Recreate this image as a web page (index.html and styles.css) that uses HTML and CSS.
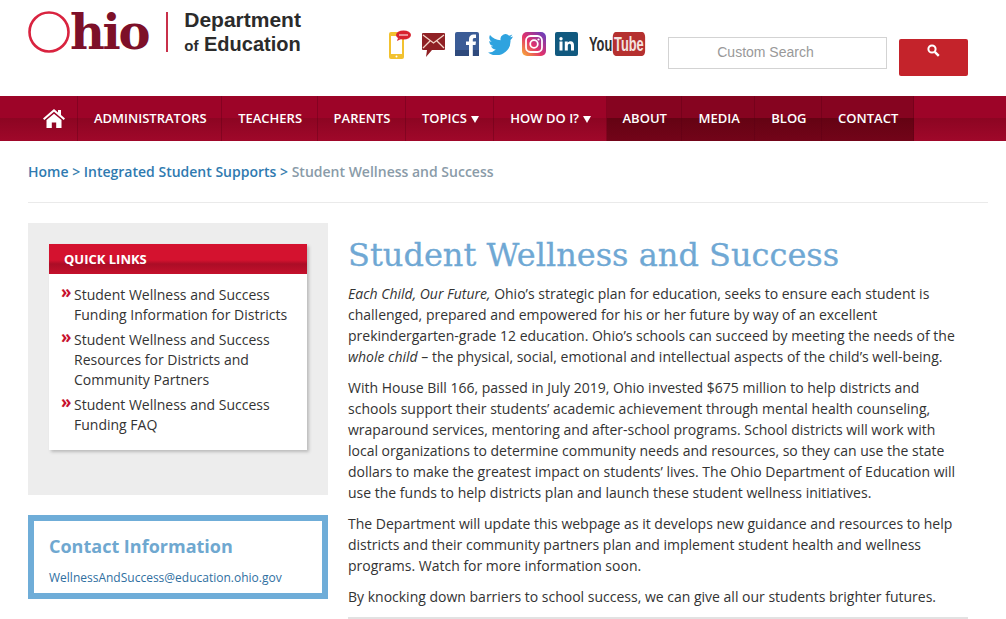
FILE: index.html
```html
<!DOCTYPE html>
<html lang="en">
<head>
  <meta charset="UTF-8" />
  <title>Student Wellness and Success</title>
  <link rel="stylesheet" href="styles.css">
</head>
<body>
  <header class="site-header">
    <a class="logo" href="#">
      <svg class="logo-o" width="43" height="42" viewBox="0 0 43 42"><circle cx="21" cy="21" r="19.5" fill="none" stroke="#d9233f" stroke-width="2.6"/></svg>
      <span class="logo-hio">hio</span>
      <span class="logo-rule"></span>
      <span class="logo-dept"><span class="dept-top">Department</span><br><small>of</small> Education</span>
    </a>
    <div class="social">
      <svg width="24" height="30" viewBox="0 0 24 30"><rect x="1" y="3" width="15" height="27" rx="2" fill="#f2c230"/><rect x="3" y="7" width="11" height="18" fill="#fff"/><circle cx="8.500" cy="27.500" r="1" fill="#fff"/><ellipse cx="15.500" cy="6" rx="7.500" ry="4.500" fill="#d8232f"/><path d="M10 9l-1 3 4-2z" fill="#d8232f"/><path d="M11 6h9" stroke="#fff" stroke-width="1"/></svg>
      <svg width="25" height="25" viewBox="0 0 25 25"><path d="M2 1h21a1 1 0 0 1 1 1v15a1 1 0 0 1-1 1H11l-6 7 1-7H2a1 1 0 0 1-1-1V2a1 1 0 0 1 1-1z" fill="#8f2024"/><path d="M2 3l10.500 8L23 3M2 16l7-7M23 16l-7-7" fill="none" stroke="#f3d5c8" stroke-width="1.300"/></svg>
      <svg width="24" height="24" viewBox="0 0 24 24"><rect width="24" height="24" rx="2" fill="#3b5c96"/><rect y="18" width="24" height="6" fill="#2f4a7c"/><path d="M14 24V13h-3V9.500h3V7c0-3 2-4.500 4.500-4.500H21V6h-1.500C18 6 17.800 6.700 17.800 8v1.500H21l-.5 3.500h-2.700v11z" fill="#fff"/></svg>
      <svg width="25" height="21" viewBox="0 0 25 21"><path d="M25 2.500a10 10 0 0 1-3 .8A5 5 0 0 0 24.300.5a10 10 0 0 1-3.200 1.200A5 5 0 0 0 12.600 6.300 14.400 14.400 0 0 1 2 1a5 5 0 0 0 1.600 6.700A5 5 0 0 1 1.300 7a5 5 0 0 0 4 5 5 5 0 0 1-2.200.1 5 5 0 0 0 4.700 3.500A10 10 0 0 1 0 18.600 14.300 14.300 0 0 0 22.500 6c1-.8 1.900-2 2.500-3.500z" fill="#2fa3df"/></svg>
      <svg width="24" height="24" viewBox="0 0 24 24"><defs><linearGradient id="ig" x1="0" y1="1" x2="1" y2="0"><stop offset="0" stop-color="#f9b233"/><stop offset=".45" stop-color="#e1306c"/><stop offset="1" stop-color="#5b3fc4"/></linearGradient></defs><rect width="24" height="24" rx="5" fill="url(#ig)"/><rect x="4" y="4" width="16" height="16" rx="4.500" fill="none" stroke="#fff" stroke-width="1.800"/><circle cx="12" cy="12" r="3.800" fill="none" stroke="#fff" stroke-width="1.800"/><circle cx="16.500" cy="7.500" r="1.100" fill="#fff"/></svg>
      <svg width="23" height="24" viewBox="0 0 23 24"><rect width="23" height="24" rx="2" fill="#11597f"/><rect x="4.500" y="9.500" width="3" height="9" fill="#fff"/><circle cx="6" cy="6.800" r="1.700" fill="#fff"/><path d="M9.800 9.500h2.900v1.300c.6-1 1.700-1.500 2.900-1.500 2.500 0 3.400 1.600 3.400 4.200v5h-3v-4.500c0-1.200-.3-2.200-1.500-2.200s-1.700 1-1.700 2.200v4.500h-3z" fill="#fff"/></svg>
      <span class="youtube"><span class="yt-you">You</span><span class="yt-tube">Tube</span></span>
    </div>
    <form class="search">
      <input class="search-input" type="text" placeholder="Custom Search">
      <button class="search-btn" type="button" aria-label="Search">
        <svg width="13" height="13" viewBox="0 0 13 13"><circle cx="5" cy="5" r="3.600" fill="none" stroke="#fff" stroke-width="2"/><path d="M7.800 7.800l4 4" stroke="#fff" stroke-width="2.400"/></svg>
      </button>
    </form>
  </header>

  <nav class="main-nav">
    <a class="nav-home" href="#" aria-label="Home">
      <svg width="22" height="19" viewBox="0 0 22 19"><path d="M11 0L0 9.500l1.300 1.500L11 2.800 20.700 11 22 9.500 18 6V1h-3v2.500z" fill="#fff"/><path d="M11 4.800L3.500 11v8h5.300v-5.500h4.400V19h5.300v-8z" fill="#fff"/></svg>
    </a>
    <a href="#">ADMINISTRATORS</a>
    <a href="#">TEACHERS</a>
    <a href="#">PARENTS</a>
    <a href="#">TOPICS <i class="caret"></i></a>
    <a href="#">HOW DO I? <i class="caret"></i></a>
    <a class="dark" href="#">ABOUT</a>
    <a class="dark" href="#">MEDIA</a>
    <a class="dark" href="#">BLOG</a>
    <a class="dark" href="#">CONTACT</a>
  </nav>

  <div class="breadcrumb">
    <a href="#">Home</a> &gt; <a href="#">Integrated Student Supports</a> &gt; <span>Student Wellness and Success</span>
  </div>

  <div class="page">
    <aside class="sidebar">
      <div class="quick-wrap">
        <div class="quick-box">
          <h3>QUICK LINKS</h3>
          <ul>
            <li>Student Wellness and Success Funding Information for Districts</li>
            <li>Student Wellness and Success Resources for Districts and Community Partners</li>
            <li>Student Wellness and Success Funding FAQ</li>
          </ul>
        </div>
      </div>
      <div class="contact">
        <h3>Contact Information</h3>
        <a href="#">WellnessAndSuccess@education.ohio.gov</a>
      </div>
    </aside>
    <main class="content">
      <h1>Student Wellness and Success</h1>
      <p><em>Each Child, Our Future,</em> Ohio’s strategic plan for education, seeks to ensure each student is challenged, prepared and empowered for his or her future by way of an excellent prekindergarten-grade 12 education. Ohio’s schools can succeed by meeting the needs of the <em>whole child</em> – the physical, social, emotional and intellectual aspects of the child’s well-being.</p>
      <p>With House Bill 166, passed in July 2019, Ohio invested $675 million to help districts and schools support their students’ academic achievement through mental health counseling, wraparound services, mentoring and after-school programs. School districts will work with local organizations to determine community needs and resources, so they can use the state dollars to make the greatest impact on students’ lives. The Ohio Department of Education will use the funds to help districts plan and launch these student wellness initiatives.</p>
      <p>The Department will update this webpage as it develops new guidance and resources to help districts and their community partners plan and implement student health and wellness programs. Watch for more information soon.</p>
      <p>By knocking down barriers to school success, we can give all our students brighter futures.</p>
      <div class="content-rule"></div>
    </main>
  </div>
</body>
</html>
```

FILE: styles.css
```css
body {
  margin: 0;
  font-family: "Open Sans", sans-serif;
  background-color: #fff;
  color: #333;
  overflow: hidden;
}

a {
  text-decoration: none;
}

.site-header {
  height: 96px;
  display: flex;
  align-items: flex-start;
  padding-left: 28px;
}

.logo {
  display: flex;
  align-items: flex-start;
  width: 360px;
  padding-top: 11px;
}

.logo-hio {
  font-family: "DejaVu Serif", serif;
  font-weight: bold;
  font-size: 48px;
  line-height: 42px;
  letter-spacing: -2.300px;
  color: #7d1029;
  margin-left: -1px;
}

.logo-rule {
  width: 2px;
  height: 40px;
  background-color: #c8304a;
  margin-left: 18px;
  margin-top: 1px;
}

.logo-dept {
  font-family: "Liberation Sans", sans-serif;
  font-weight: bold;
  font-size: 20px;
  line-height: 24px;
  color: #2b2b2b;
  margin: -3px 0 0 16px;
}

.dept-top {
  font-size: 21px;
}

.logo-dept small {
  font-size: 15px;
}

.social {
  width: 280px;
  flex: none;
  display: flex;
  align-items: center;
  gap: 9px;
  height: 30px;
  padding-top: 29px;
}

.youtube {
  display: flex;
  align-items: center;
  width: 56px;
  margin-left: 2px;
  font-family: "Liberation Sans", sans-serif;
  font-weight: bold;
  font-size: 21px;
  white-space: nowrap;
  transform: scaleX(.61);
  transform-origin: left center;
}

.yt-you {
  color: #2d2d2d;
}

.yt-tube {
  background-color: #b5302f;
  color: #f3e3e0;
  border-radius: 5px;
  padding: 0 2px;
  margin-left: 1px;
}

.search {
  display: flex;
  align-items: flex-start;
  padding-top: 37px;
}

.search-input {
  box-sizing: border-box;
  width: 219px;
  height: 32px;
  border: 1px solid #d3d3d3;
  font-family: "Liberation Sans", sans-serif;
  font-size: 14px;
  text-align: center;
  padding: 0 24px 2px 0;
}

.search-input::placeholder {
  color: #999;
}

.search-btn {
  width: 69px;
  height: 37px;
  margin: 2px 0 0 12px;
  border: none;
  border-radius: 2px;
  background-color: #c4232b;
  padding: 0 0 11px;
}

.main-nav {
  height: 45px;
  padding-left: 28px;
  display: flex;
  background: linear-gradient(#9d0428 0, #9d0428 22px, #8c0522 22px, #a0082a 100%);
}

.main-nav a {
  display: flex;
  align-items: center;
  gap: 4px;
  padding: 0 14.500px 1px 16px;
  border-right: 1px solid rgba(90, 0, 20, .35);
  color: #fff;
  font-size: 13px;
  font-weight: 600;
}

.main-nav .nav-home {
  width: 50px;
  box-sizing: border-box;
  padding: 0 0 0 15px;
}

.main-nav .dark {
  background: linear-gradient(#860420 0, #860420 22px, #640313 22px, #730419 100%);
}

.caret {
  width: 0;
  height: 0;
  border-left: 4px solid transparent;
  border-right: 4px solid transparent;
  border-top: 7px solid #fff;
  margin-top: 2px;
}

.breadcrumb {
  margin: 0 18px 0 28px;
  height: 62px;
  line-height: 61px;
  box-sizing: border-box;
  border-bottom: 1px solid #eaeaea;
  font-size: 14px;
  font-weight: 600;
  color: #3a7fb0;
}

.breadcrumb a {
  color: #2f7ab0;
}

.breadcrumb span {
  color: #8a9ba8;
}

.page {
  display: flex;
  gap: 20px;
  padding: 20px 38px 0 28px;
}

.sidebar {
  width: 300px;
  flex: none;
}

.quick-wrap {
  background-color: #ededed;
  padding: 21px 21px 45px;
}

.quick-box {
  background-color: #fff;
  box-shadow: 2px 2px 3px #bbb;
}

.quick-box h3 {
  margin: 0;
  height: 30px;
  line-height: 30px;
  padding-left: 15px;
  font-size: 13px;
  font-weight: bold;
  color: #fff;
  background: linear-gradient(#d4122f 0, #d4122f 16px, #ab0d26 20px, #c4102c 100%);
}

.quick-box ul {
  list-style: none;
  margin: 0;
  padding: 11px 12px 15px 25px;
}

.quick-box li {
  position: relative;
  font-size: 14px;
  line-height: 20px;
  margin-bottom: 5px;
}

.quick-box li:last-child {
  margin-bottom: 0;
}

.quick-box li::before {
  content: "»";
  position: absolute;
  left: -13px;
  top: -3px;
  color: #c8102e;
  font-weight: bold;
  font-size: 17px;
}

.contact {
  margin-top: 20px;
  border: 6px solid #6fadd8;
  padding: 11px 15px 8px;
}

.contact h3 {
  margin: 0 0 11px;
  font-size: 18px;
  line-height: 28px;
  font-weight: bold;
  color: #6fa8d0;
}

.contact a {
  display: block;
  font-size: 12px;
  line-height: 14px;
  color: #2f6f9f;
}

.content {
  flex: 1;
}

.content h1 {
  margin: 11px 0 7px;
  font-family: "DejaVu Serif", serif;
  font-weight: normal;
  font-size: 32px;
  line-height: 42px;
  color: #6fa8d4;
  -webkit-text-stroke: .3px #6fa8d4;
}

.content p {
  margin: 0 0 10px;
  font-size: 14px;
  line-height: 21px;
}

.content-rule {
  height: 2px;
  background-color: #e2e2e2;
  margin-top: 10px;
}
```
